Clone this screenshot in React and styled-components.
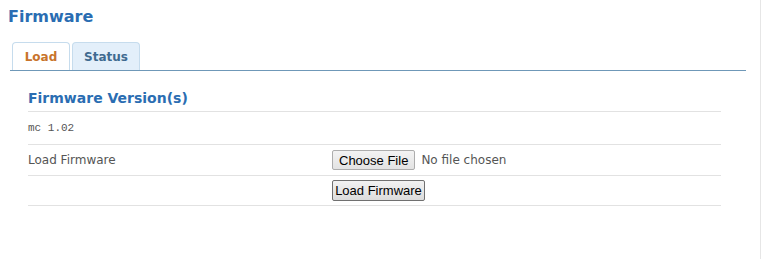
import React from 'react';
import styled, { createGlobalStyle } from 'styled-components';

const GlobalStyle = createGlobalStyle`
    body {
        margin:0;
        background:#fff;
        font-family:'DejaVu Sans', Verdana, sans-serif;
    }
`

const Page = styled.div`
    width:761px;
    height:259px;
    box-sizing:border-box;
    border-right:1px solid #e6e6e6;
    padding:7px 0 0 0;
`

const Title = styled.h1`
    margin:0 0 0 8px;
    font-size:16px;
    font-weight:700;
    color:#2a6db2;
    line-height:20px;
`

const TabBar = styled.div`
    display:flex;
    gap:2px;
    margin:14px 14px 0 10px;
    padding-left:2px;
    border-bottom:1px solid #6f98b8;
    height:29px;
    align-items:flex-end;
`

const Tab = styled.div`
    width:${props => props.w}px;
    height:28px;
    box-sizing:border-box;
    border:1px solid #c6dced;
    border-bottom:none;
    border-radius:4px 4px 0 0;
    background:${props => props.active ? '#fff' : '#e3effa'};
    color:${props => props.active ? '#c8742c' : '#3f6a90'};
    font-size:12px;
    font-weight:700;
    display:flex;
    justify-content:center;
    align-items:center;
`

const Panel = styled.div`
    margin:18px 39px 0 28px;
`

const Section = styled.div`
    font-size:14px;
    font-weight:700;
    color:#2a6db2;
    line-height:18px;
    padding-bottom:4px;
    border-bottom:1px solid #e2e2e2;
`

const Row = styled.div`
    display:grid;
    grid-template-columns:304px 1fr;
    align-items:center;
    height:${props => props.h}px;
    border-bottom:1px solid #e2e2e2;
    font-size:12px;
    color:#555;
`

const Mono = styled.span`
    font-family:'Liberation Mono', 'Courier New', monospace;
    font-size:11px;
    color:#555;
`

const FileField = styled.div`
    display:flex;
    align-items:center;
    gap:6px;
`

const FileButton = styled.button`
    font-family:'Liberation Sans', Arial, sans-serif;
    font-size:13px;
    color:#000;
    height:20px;
    padding:0 6px;
    border:1px solid #adadad;
    border-radius:2px;
    background:linear-gradient(#f3f3f3, #e3e3e3);
`

const NoFile = styled.span`
    font-size:12px;
    color:#555;
`

const SubmitButton = styled.button`
    font-family:'Liberation Sans', Arial, sans-serif;
    font-size:13px;
    color:#000;
    height:21px;
    width:93px;
    padding:0;
    border:1px solid #707070;
    border-radius:2px;
    background:linear-gradient(#f2f2f2, #dcdcdc);
`

export default function App() {
    return (
        <Page>
            <GlobalStyle />
            <Title>Firmware</Title>
            <TabBar>
                <Tab w={58} active>Load</Tab>
                <Tab w={68}>Status</Tab>
            </TabBar>
            <Panel>
                <Section>Firmware Version(s)</Section>
                <Row h={32}><Mono>mc 1.02</Mono><span /></Row>
                <Row h={30}>
                    <span>Load Firmware</span>
                    <FileField>
                        <FileButton>Choose File</FileButton>
                        <NoFile>No file chosen</NoFile>
                    </FileField>
                </Row>
                <Row h={29}>
                    <span />
                    <div><SubmitButton>Load Firmware</SubmitButton></div>
                </Row>
            </Panel>
        </Page>
    );
}
